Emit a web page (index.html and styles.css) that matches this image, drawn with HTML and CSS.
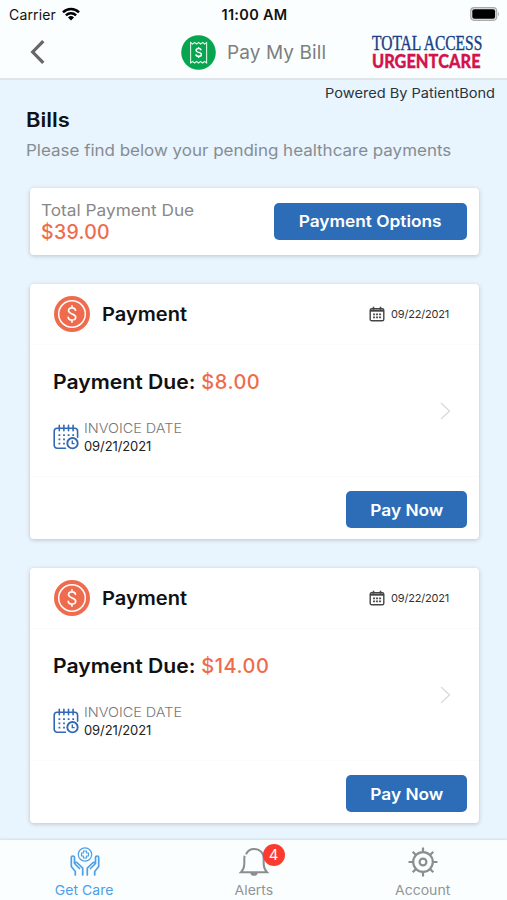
FILE: index.html
```
<!DOCTYPE html>
<html lang="en">
<head>
<meta charset="utf-8">
<title>Pay My Bill</title>
<link rel="stylesheet" href="styles.css">
</head>
<body>
<div class="app">
  <svg width="0" height="0" class="defs" aria-hidden="true">
    <symbol id="coin" viewBox="0 0 36 36"><circle cx="18" cy="18" r="18" fill="#ee6c4d"/><circle cx="18" cy="18" r="13.3" fill="none" stroke="#fff" stroke-width="1.5"/><path d="M21.500 14.300c-.3-1.500-1.600-2.400-3.500-2.400-2.100 0-3.500 1-3.500 2.700 0 4 7.200 2.700 7.200 6.600 0 1.800-1.500 2.800-3.700 2.800-2.100 0-3.600-.9-3.800-2.700M18 9.800v2M18 24.200v2.100" fill="none" stroke="#fff" stroke-width="1.600" stroke-linecap="round"/></symbol>
    <symbol id="cal" viewBox="0 0 16 16"><rect x="1.200" y="2.600" width="13.600" height="12.200" rx="1.600" fill="none" stroke="#444" stroke-width="1.400"/><path d="M1 3.500h14v2.200H1z" fill="#444"/><path d="M4.500 .7v3M11.500 .7v3" stroke="#444" stroke-width="1.600"/><path d="M4 8.400h8.200M4 11.300h8.200" stroke="#555" stroke-width="1.800" stroke-dasharray="2.100 .9"/></symbol>
    <symbol id="invoice" viewBox="0 0 26 26"><path d="M12.500 24.200H4.200a3 3 0 0 1-3-3V7.200c0-2 1-3 3-3h17.400c2 0 3 1 3 3v6M6.300 1.200v5.500M10.900 1.200v5.500M15.500 1.200v5.500M20.100 1.200v5.500" fill="none" stroke="#3269b2" stroke-width="1.600" stroke-linecap="round"/><path d="M5.500 11.200h16M5.500 15.400h9M5.500 19.600h7" stroke="#3269b2" stroke-width="1.800" stroke-dasharray="1.800 2.800"/><circle cx="19.500" cy="19.200" r="5.200" fill="#fff" stroke="#3269b2" stroke-width="1.900"/><path d="M19.300 16.600v3h2.300" fill="none" stroke="#3269b2" stroke-width="1.400"/></symbol>
  </svg>
  <header class="top">
    <div class="status">
      <div class="carrier"><span class="s-carrier">Carrier</span>
        <svg width="18" height="14" viewBox="0 0 18 14" fill="none" stroke="#000" stroke-width="2.500"><path d="M1 5.300a11.500 11.500 0 0 1 16 0M3.900 8.300a7.400 7.400 0 0 1 10.200 0"/><path d="M9 13.500l-3-3.100a4.300 4.300 0 0 1 6 0z" fill="#000" stroke="none"/></svg>
      </div>
      <span class="s-time">11:00 AM</span>
      <svg class="battery" width="30" height="14" viewBox="0 0 30 14"><rect x=".7" y=".7" width="26" height="12.600" rx="3.500" fill="#e4e6e6" stroke="#aaa" stroke-width="1.200"/><rect x="2.300" y="2.300" width="22.800" height="9.400" rx="2" fill="#000"/><path d="M28 4.700q1.900 2.300 0 4.600z" fill="#aaa"/></svg>
    </div>
    <nav class="bar">
      <svg class="back" width="16" height="26" viewBox="0 0 16 26"><path d="M13.300 2.200L2.700 13l10.600 10.800" fill="none" stroke="#666" stroke-width="3.200"/></svg>
      <div class="heading">
        <svg width="35" height="35" viewBox="0 0 35 35"><circle cx="17.500" cy="17.500" r="17.300" fill="#07a550"/><path d="M9.600 7.500l2 1.500 2-1.500 2 1.500 2-1.500 2 1.500 2-1.500 2 1.500 2-1.500v20.500l-2-1.500-2 1.500-2-1.500-2 1.500-2-1.500-2 1.500-2-1.500-2 1.500z" fill="none" stroke="#d9f5e3" stroke-width="1.100"/><path d="M20.200 15.200c-.3-1.100-1.300-1.600-2.600-1.600-1.500 0-2.500.7-2.500 1.800 0 2.600 5.300 1.300 5.300 4 0 1.200-1.200 1.900-2.700 1.900-1.600 0-2.700-.7-2.800-1.900M17.600 12v1.500M17.600 21.300v1.600" fill="none" stroke="#fff" stroke-width="1.500"/></svg>
        <h1 class="s-title">Pay My Bill</h1>
      </div>
      <div class="brand"><span class="s-b1">TOTAL ACCESS</span><span class="s-b2">URGENT CARE</span></div>
    </nav>
  </header>
  <main>
    <p class="powered">Powered By PatientBond</p>
    <h2 class="s-bills">Bills</h2>
    <p class="s-sub">Please find below your pending healthcare payments</p>
    <section class="card total">
      <div class="sum"><span class="s-tot">Total Payment Due</span><span class="s-amt">$39.00</span></div>
      <button class="btn wide"><span>Payment Options</span></button>
    </section>
    <article class="card bill">
      <div class="head"><svg class="coin"><use href="#coin"/></svg><h3 class="s-pay">Payment</h3><svg class="cal"><use href="#cal"/></svg><time class="s-date">09/22/2021</time></div>
      <div class="body">
        <div class="detail"><p class="due"><span class="s-due">Payment Due:</span><span class="s-price">$8.00</span></p>
          <div class="inv"><svg class="invoice"><use href="#invoice"/></svg><div class="sum"><span class="s-il">INVOICE DATE</span><span class="s-id">09/21/2021</span></div></div></div>
        <svg class="go" width="11" height="18" viewBox="0 0 11 18"><path d="M1 1l8.500 8L1 17" fill="none" stroke="#d8dadb" stroke-width="1.300"/></svg>
      </div>
      <div class="foot"><button class="btn"><span>Pay Now</span></button></div>
    </article>
    <article class="card bill">
      <div class="head"><svg class="coin"><use href="#coin"/></svg><h3 class="s-pay">Payment</h3><svg class="cal"><use href="#cal"/></svg><time class="s-date">09/22/2021</time></div>
      <div class="body">
        <div class="detail"><p class="due"><span class="s-due">Payment Due:</span><span class="s-price">$14.00</span></p>
          <div class="inv"><svg class="invoice"><use href="#invoice"/></svg><div class="sum"><span class="s-il">INVOICE DATE</span><span class="s-id">09/21/2021</span></div></div></div>
        <svg class="go" width="11" height="18" viewBox="0 0 11 18"><path d="M1 1l8.500 8L1 17" fill="none" stroke="#d8dadb" stroke-width="1.300"/></svg>
      </div>
      <div class="foot"><button class="btn"><span>Pay Now</span></button></div>
    </article>
  </main>
  <footer class="tabs">
    <a class="tab active"><svg width="32" height="32" viewBox="0 0 32 32" fill="none" stroke="#4d9fe6" stroke-width="1.700" stroke-linejoin="round" stroke-linecap="round"><circle cx="16" cy="8.500" r="6.700" stroke-width="1.200"/><path d="M14.500 5h3v2h2v3h-2v2h-3v-2h-2V7h2z" stroke-width="1.200"/><path d="M6.300 29v-3.500l-4-5V11.500c0-2 3.200-2 3.200 0v6l5 5M5.500 17.500c1-1.800 2.500-1.300 3.500 0l4.700 4.700V29M25.700 29v-3.500l4-5V11.500c0-2-3.200-2-3.200 0v6l-5 5M26.500 17.500c-1-1.800-2.500-1.300-3.500 0l-4.700 4.700V29"/></svg><span>Get Care</span></a>
    <a class="tab"><span class="bell"><svg width="32" height="32" viewBox="0 0 32 32"><path d="M8 8.300C9.500 4.900 12.200 3 16 3c5.800 0 9.700 3.800 9.700 9.800v5.500c.2 3.500.9 5.700 3.300 8H3c2.400-2.300 3.100-4.500 3.300-8v-5.500c0-1.100.1-2.100.4-3" fill="none" stroke="#8b8e8f" stroke-width="2"/><path d="M12.300 27h7.400c-.5 3.800-6.900 3.800-7.400 0z" fill="#8b8e8f"/></svg><b class="badge">4</b></span><span>Alerts</span></a>
    <a class="tab"><svg width="32" height="32" viewBox="0 0 32 32" fill="none" stroke="#8b8e8f" stroke-width="2.200"><circle cx="16" cy="16" r="9.800"/><circle cx="16" cy="16" r="3.400"/><path d="M16 1.500v5M16 25.500v5M1.500 16h5M25.500 16h5M5.700 5.700l3.500 3.500M22.800 22.800l3.500 3.500M26.300 5.700l-3.500 3.500M9.200 22.800l-3.500 3.500"/></svg><span>Account</span></a>
  </footer>
</div>
</body>
</html>
```
FILE: styles.css
```
* { box-sizing: border-box; }
body { margin: 0; font-family: Inter, sans-serif; color: #111; }
h1, h2, h3, p { margin: 0; }
svg { flex: none; display: block; }
.app { height: 900px; overflow: hidden; display: flex; flex-direction: column; background: #e8f4fe; white-space: nowrap; }
main { flex: 1; min-height: 0; }

.powered, .s-bills, .s-sub, .s-tot, .s-pay, .s-due, .s-il, .s-b1, .s-b2 { transform: scaleX(var(--w)); transform-origin: left; }
.btn span, .tab > span:last-child { display: inline-block; transform: scaleX(1.08); }

.top { height: 80px; flex: none; background: #fbfefe; border-bottom: 2px solid #dfe5e8; }
.status { height: 28px; padding: 0 7px 0 9px; display: grid; grid-template-columns: 1fr auto 1fr; align-items: center; }
.carrier { display: flex; align-items: center; gap: 6px; }
.battery { justify-self: end; }
.s-carrier { font-size: 14px; letter-spacing: .15px; }
.s-time { font-size: 14.5px; font-weight: 600; letter-spacing: .3px; }
.bar { height: 48px; display: flex; align-items: center; padding: 0 23px 0 30px; }
.heading { display: flex; align-items: center; gap: 11px; margin-left: 135px; }
.s-title { font-size: 19px; line-height: 26px; font-weight: 400; letter-spacing: .1px; color: #7c7f80; padding-top: 1px; }
.brand { margin-left: auto; width: 112px; display: flex; flex-direction: column; align-items: flex-start; }
.s-b1 { --w: .775; font: 20px/17px "Liberation Serif", serif; color: #173f85; -webkit-text-stroke: .4px #173f85; }
.s-b2 { --w: .86; font: 900 19px/17px Lato, sans-serif; word-spacing: -4px; color: #d4124d; -webkit-text-stroke: .3px #d4124d; }

.powered { --w: 1.08; padding-right: 12px; transform-origin: 495px 50%; text-align: right; font-size: 13.5px; line-height: 26px; color: #2c333a; }
.s-bills { --w: 1.1; margin-left: 26px; font-size: 20px; line-height: 28px; font-weight: 600; }
.s-sub { --w: 1.06; margin-left: 26px; width: 440px; font-size: 16px; line-height: 32px; color: #868d92; }

.card { background: #fff; border-radius: 4px; margin: 0 28px 29px 30px; box-shadow: 0 1px 4px #bbc3c9; }
.total { margin-top: 22px; height: 67px; padding: 0 12px 1px 11px; display: flex; align-items: center; justify-content: space-between; }
.sum { display: flex; flex-direction: column; align-items: flex-start; }
.s-tot { --w: 1.077; font-size: 16px; line-height: 22px; color: #888; }
.s-amt { font-size: 19.5px; line-height: 22px; font-weight: 500; letter-spacing: .3px; color: #ee6c4d; }
.btn { width: 121px; height: 37px; padding: 0; border: 0; border-radius: 5px; background: #2d6db7; color: #fff; font: 600 16px Inter, sans-serif; }
.wide { width: 193px; }

.bill { height: 255px; }
.head { height: 61px; padding: 0 30px 0 24px; display: flex; align-items: center; border-bottom: 1px solid #fbfbfb; }
.coin { width: 36px; height: 36px; }
.s-pay { --w: 1.084; margin-left: 12px; font-size: 18.5px; font-weight: 600; }
.cal { width: 16px; height: 16px; margin-left: auto; }
.s-date { margin-left: 6px; font-size: 11px; letter-spacing: -.2px; color: #333; }
.body { height: 132px; padding: 0 28px 0 23px; display: flex; justify-content: space-between; align-items: center; border-bottom: 1px solid #fbfbfb; }
.detail { height: 132px; padding-top: 23px; }
.due { display: flex; gap: 17px; line-height: 28px; }
.s-due { --w: 1.085; font-size: 19.5px; font-weight: 600; }
.s-price { font-size: 20px; font-weight: 500; letter-spacing: .5px; color: #ee6c4d; }
.inv { margin-top: 23px; display: flex; align-items: center; gap: 5px; line-height: 18px; }
.invoice { width: 26px; height: 26px; }
.s-il { --w: 1.085; font-size: 13.3px; font-weight: 300; color: #777; }
.s-id { font-size: 13px; letter-spacing: -.1px; color: #222; }
.foot { height: 62px; padding: 14px 12px 0 0; display: flex; justify-content: flex-end; }

.tabs { flex: none; height: 60px; display: flex; background: #fbfefe; box-shadow: 0 -1px 2px #d5dde2; position: relative; }
.tab { flex: 1; padding-top: 6px; display: flex; flex-direction: column; align-items: center; font-size: 13px; line-height: 24px; color: #909495; }
.active { color: #4d9fe6; }
.bell { position: relative; }
.badge { position: absolute; left: 25px; top: -2px; width: 22px; height: 22px; border-radius: 50%; background: #fb3b30; color: #fff; font: 15px/22px Inter, sans-serif; text-align: center; }
```
